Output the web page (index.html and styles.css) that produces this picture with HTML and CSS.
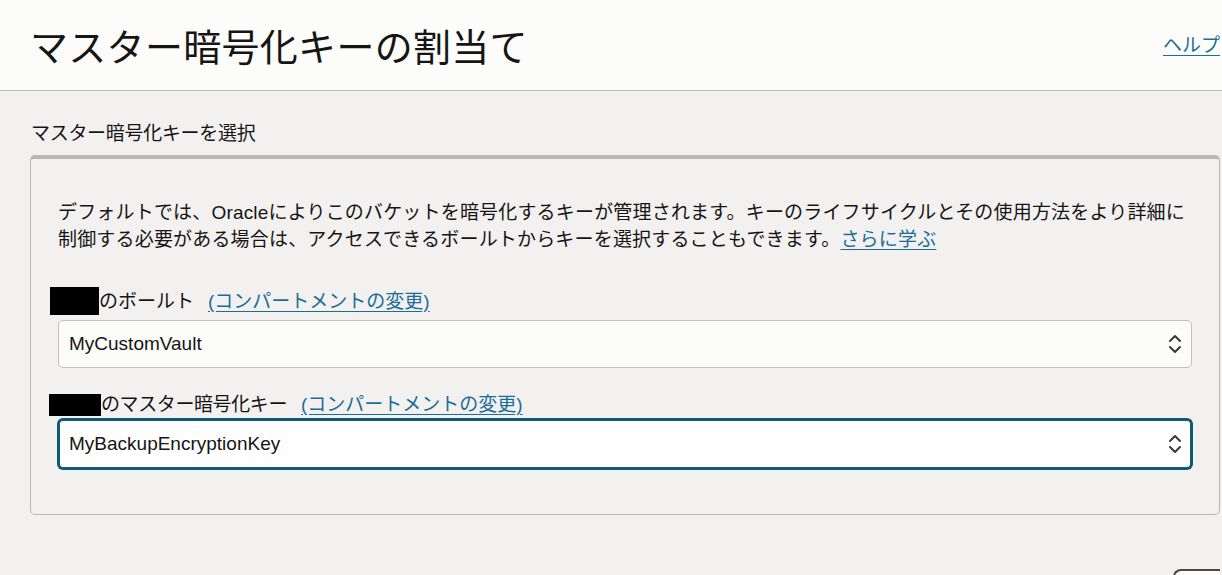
FILE: index.html
```html
<!DOCTYPE html>
<html lang="ja">
<head>
<meta charset="utf-8">
<title>マスター暗号化キーの割当て</title>
<link rel="stylesheet" href="styles.css">
</head>
<body>
<header class="page-header">
  <h1 class="page-title">マスター暗号化キーの割当て</h1>
  <a class="help-link" href="#">ヘルプ</a>
</header>
<main class="content">
  <h2 class="section-title">マスター暗号化キーを選択</h2>
  <section class="panel">
    <p class="intro">デフォルトでは、Oracleによりこのバケットを暗号化するキーが管理されます。キーのライフサイクルとその使用方法をより詳細に制御する必要がある場合は、アクセスできるボールトからキーを選択することもできます。<a class="link" href="#">さらに学ぶ</a></p>

    <div class="field field-vault">
      <div class="field-label"><span class="redact redact-1"></span>のボールト<a class="link change-link" href="#">(コンパートメントの変更)</a></div>
      <div class="select">
        <span class="select-value">MyCustomVault</span>
        <svg class="chevrons" width="14" height="22" viewBox="0 0 14 22" aria-hidden="true"><path d="M2 8 L7 3 L12 8" fill="none" stroke="#3b3936" stroke-width="2" stroke-linecap="round" stroke-linejoin="round"/><path d="M2 14 L7 19 L12 14" fill="none" stroke="#3b3936" stroke-width="2" stroke-linecap="round" stroke-linejoin="round"/></svg>
      </div>
    </div>

    <div class="field field-key">
      <div class="field-label"><span class="redact redact-2"></span>のマスター暗号化キー<a class="link change-link" href="#">(コンパートメントの変更)</a></div>
      <div class="select select-focused">
        <span class="select-value">MyBackupEncryptionKey</span>
        <svg class="chevrons" width="14" height="22" viewBox="0 0 14 22" aria-hidden="true"><path d="M2 8 L7 3 L12 8" fill="none" stroke="#3b3936" stroke-width="2" stroke-linecap="round" stroke-linejoin="round"/><path d="M2 14 L7 19 L12 14" fill="none" stroke="#3b3936" stroke-width="2" stroke-linecap="round" stroke-linejoin="round"/></svg>
      </div>
    </div>
  </section>
  <div class="footer-actions">
    <button class="btn" type="button" aria-label="保存"></button>
  </div>
</main>
</body>
</html>
```

FILE: styles.css
```css
html, body {
  margin: 0;
  padding: 0;
}
body {
  background: #f2f1f0;
  color: #161513;
  font-family: "Liberation Sans", "Noto Sans CJK JP", sans-serif;
  overflow: hidden;
  height: 575px;
}
.page-header {
  height: 90px;
  background: #fcfcfb;
  border-bottom: 1px solid #bdbbb8;
  display: flex;
  align-items: center;
  justify-content: space-between;
  padding: 0 2px 0 30px;
}
.page-title {
  margin: 0;
  font-size: 38px;
  line-height: 38px;
  font-weight: normal;
  letter-spacing: 0.3px;
  padding-top: 6px;
}
.help-link {
  color: #1b6d96;
  font-size: 19px;
  line-height: 27px;
  text-decoration: underline;
  text-underline-offset: 3px;
}
.content {
  padding: 29px 2px 0 30px;
}
.section-title {
  margin: 0 0 8px 1px;
  font-size: 19px;
  line-height: 27px;
  font-weight: normal;
  letter-spacing: -0.3px;
}
.panel {
  border: 1px solid #bcb8b1;
  border-top-width: 4px;
  border-radius: 5px;
  padding: 40px 27px 45px;
}
.intro {
  margin: 0;
  font-size: 19px;
  line-height: 27px;
  letter-spacing: 0.18px;
}
.link {
  color: #1b6d96;
  text-decoration: underline;
  text-underline-offset: 3px;
}
.field-vault {
  margin-top: 34px;
}
.field-key {
  margin-top: 23px;
}
.field-label {
  font-size: 19px;
  line-height: 27px;
  display: flex;
  align-items: center;
}
.change-link {
  margin-left: 14px;
}
.field-key .field-label {
  letter-spacing: -0.4px;
}
.field-key .change-link {
  letter-spacing: 0;
  margin-left: 14px;
}
.redact {
  display: inline-block;
  background: #000;
}
.redact-1 {
  width: 49px;
  height: 28px;
  margin-left: -8px;
}
.redact-2 {
  width: 52px;
  height: 22px;
  margin-left: -9px;
}
.select {
  margin-top: 5px;
  height: 48px;
  box-sizing: border-box;
  border: 1px solid #c3c0ba;
  border-radius: 5px;
  background: #fcfcfb;
  display: flex;
  align-items: center;
  justify-content: space-between;
  padding: 0 9px 0 10px;
  font-size: 19px;
}
.select-focused {
  margin-top: 1px;
  height: 50px;
  border: 2px solid #0f5878;
  box-shadow: 0 0 0 1px #0f5878;
  padding: 0 8px 0 9px;
  background: #fefefe;
}
.chevrons {
  display: block;
}
.footer-actions {
  display: flex;
  justify-content: flex-end;
  margin-top: 54px;
}
.btn {
  width: 47px;
  height: 44px;
  border: 2px solid #4a4744;
  border-right: none;
  border-radius: 8px 0 0 8px;
  background: #fcfcfb;
}
```
